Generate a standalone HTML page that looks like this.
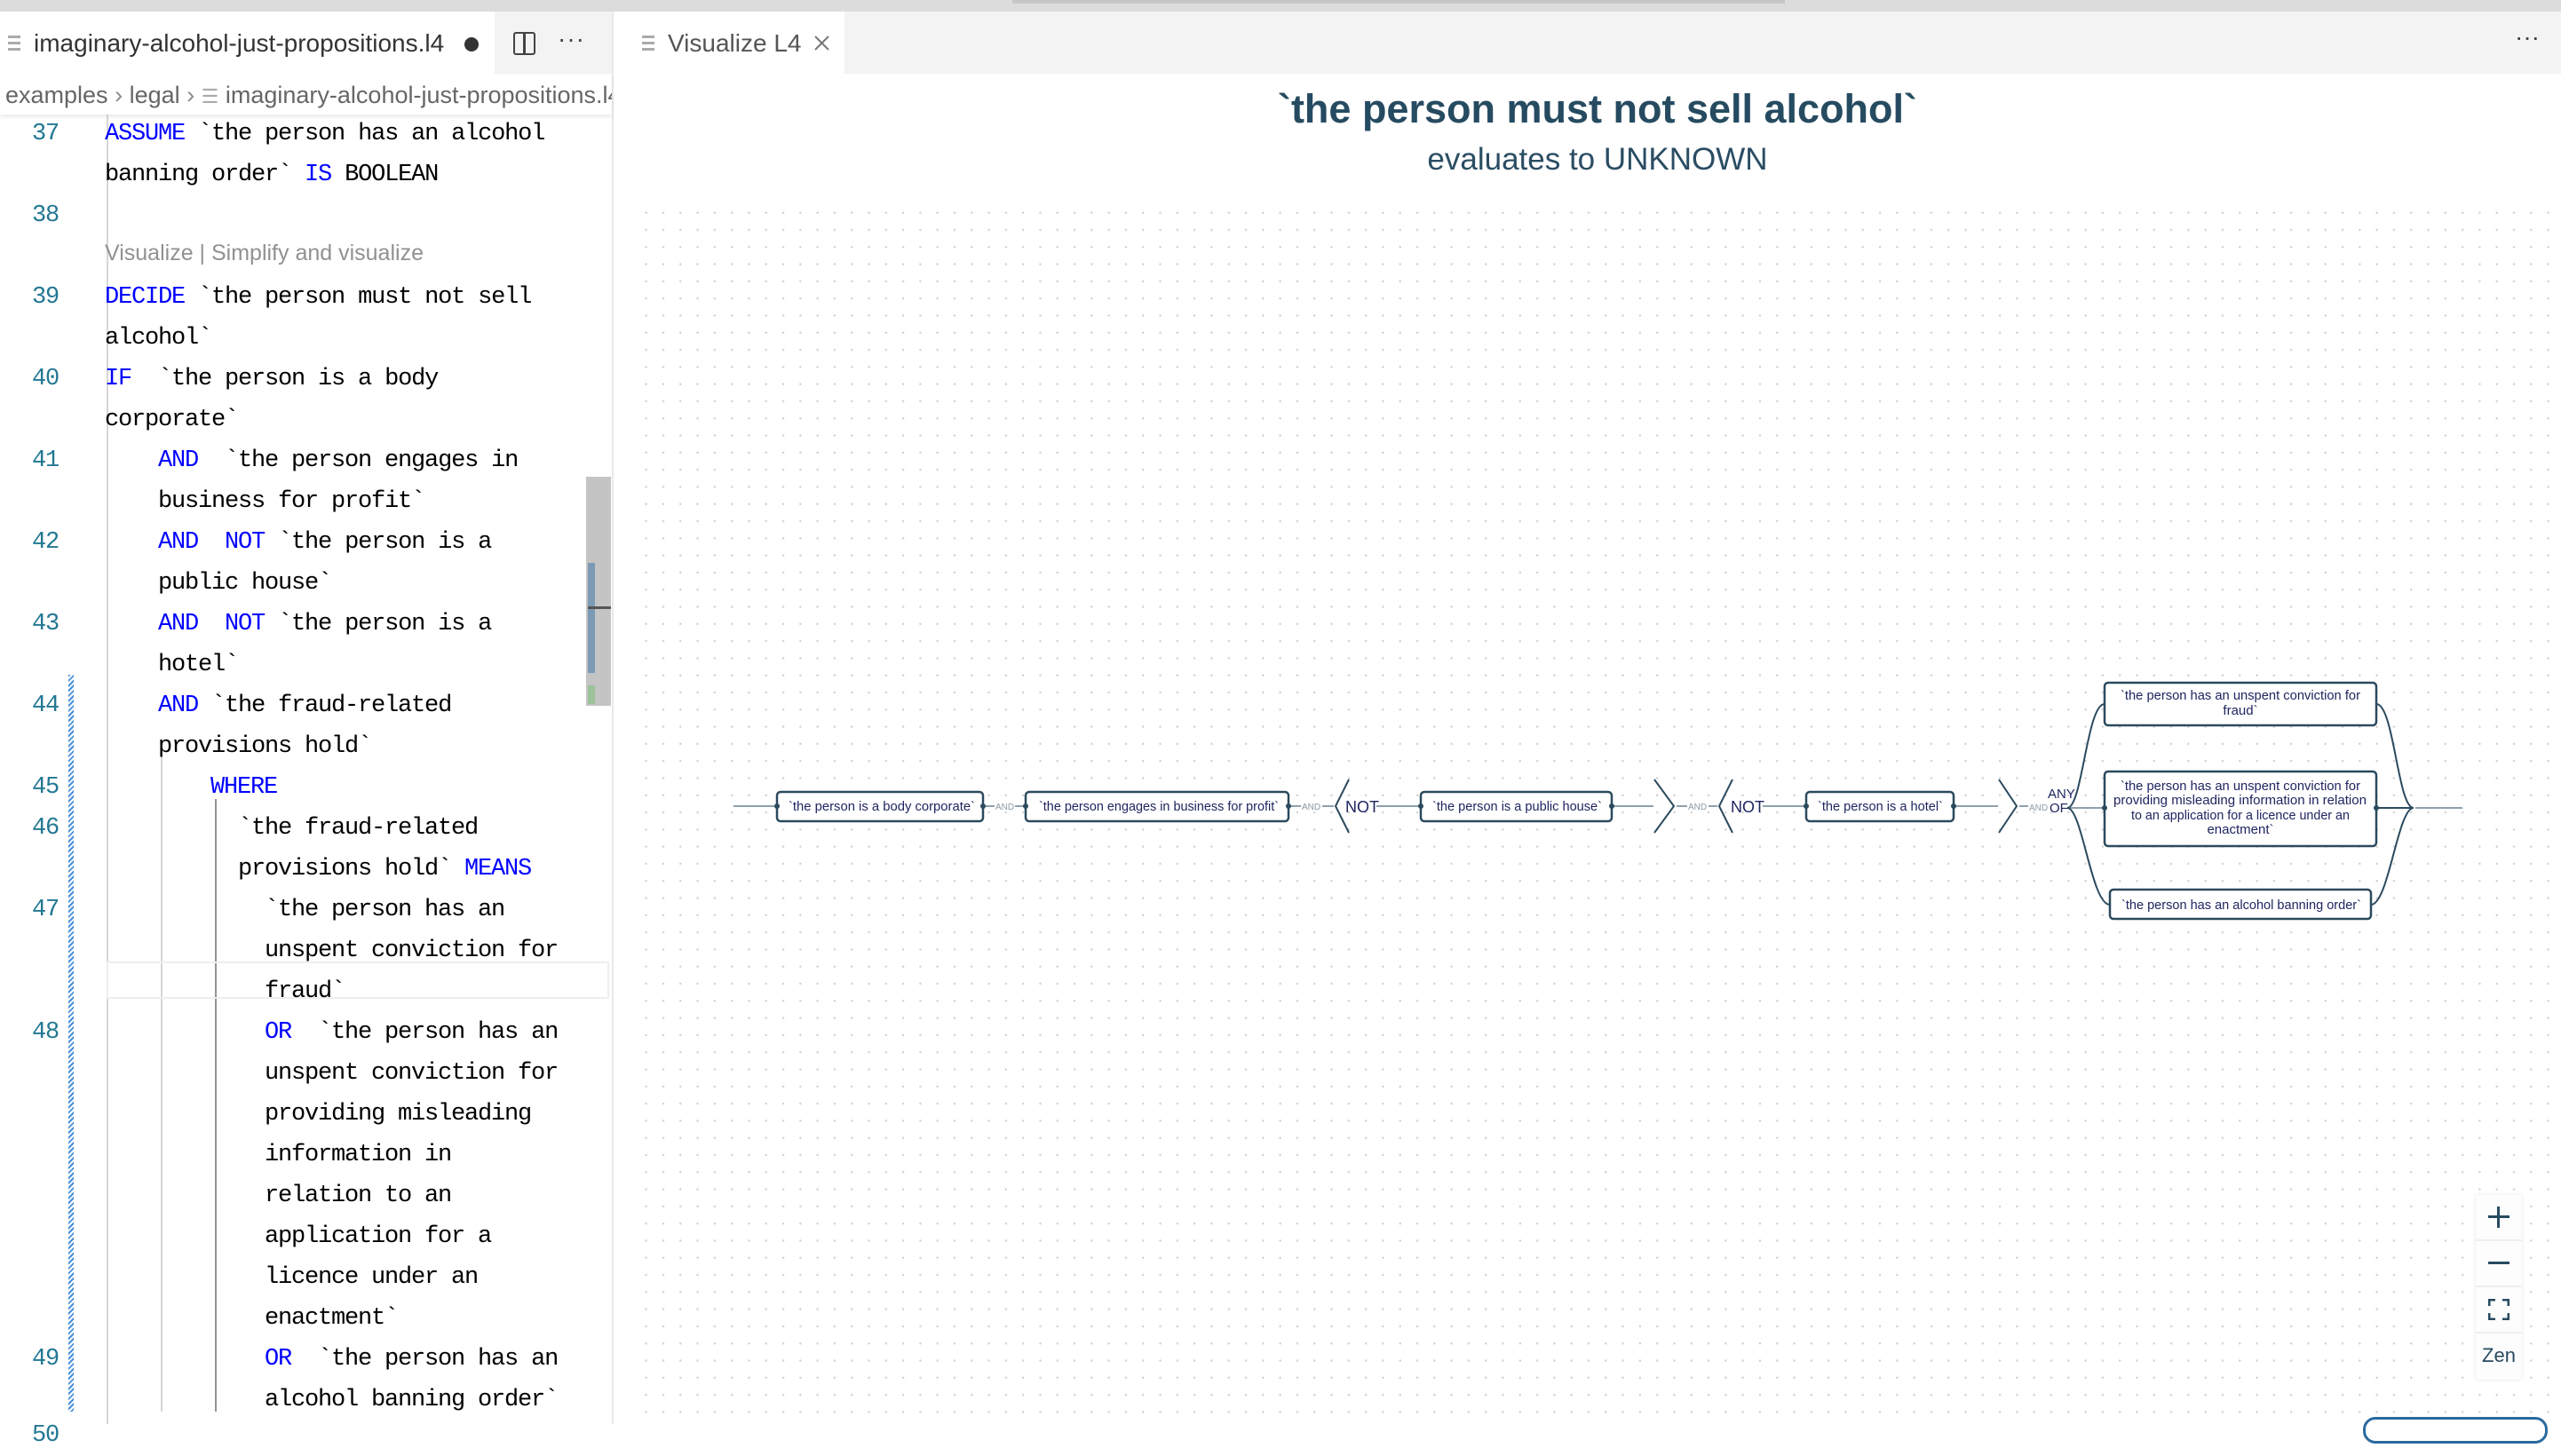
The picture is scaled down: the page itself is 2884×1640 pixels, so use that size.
<!DOCTYPE html>
<html><head><meta charset="utf-8"><style>
*{margin:0;padding:0;box-sizing:border-box}
body{width:2884px;height:1604px;overflow:hidden;background:#fff;position:relative;font-family:"Liberation Sans",sans-serif}
.abs{position:absolute}
.code{font-family:"Liberation Mono",monospace;font-size:27px;letter-spacing:-1.2px;white-space:pre;color:#000;line-height:46px;height:46px}
.ln{font-family:"Liberation Mono",monospace;font-size:27px;letter-spacing:-1.2px;color:#237893;line-height:46px;position:absolute;left:36px}
.k{color:#0000ff}
.ig{position:absolute;width:2px;background:#d6d6d6}
</style></head><body>
<div class="abs" style="left:0;top:0;width:2884px;height:13px;background:#dcdcdc"></div>
<div class="abs" style="left:1140px;top:0;width:870px;height:4px;background:#c6c6c6"></div>
<div class="abs" style="left:0;top:13px;width:2884px;height:70px;background:#f3f3f3"></div>
<div class="abs" style="left:0;top:13px;width:557px;height:70px;background:#fff"></div>
<div class="abs" style="left:9px;top:40px;width:14px;height:3px;background:#aaa;box-shadow:0 7px 0 #aaa,0 14px 0 #aaa"></div>
<div class="abs" style="left:38px;top:33px;font-size:28px;color:#333">imaginary-alcohol-just-propositions.l4</div>
<div class="abs" style="left:523px;top:42px;width:16px;height:16px;border-radius:50%;background:#333"></div>
<div class="abs" style="left:578px;top:36px;width:25px;height:26px;border:2.5px solid #444;border-radius:3px"></div>
<div class="abs" style="left:589px;top:36px;width:2.5px;height:26px;background:#444"></div>
<div class="abs" style="left:628px;top:28px;font-size:28px;color:#444;letter-spacing:1px">···</div>
<div class="abs" style="left:689px;top:13px;width:2px;height:1591px;background:#e8e8e8"></div>
<div class="abs" style="left:691px;top:13px;width:260px;height:70px;background:#fff"></div>
<div class="abs" style="left:723px;top:40px;width:14px;height:3px;background:#aaa;box-shadow:0 7px 0 #aaa,0 14px 0 #aaa"></div>
<div class="abs" style="left:752px;top:33px;font-size:28px;color:#555">Visualize L4</div>
<svg class="abs" style="left:917px;top:40px" width="17" height="17"><path d="M1 1L16 16M16 1L1 16" stroke="#777" stroke-width="2"/></svg>
<div class="abs" style="left:2832px;top:26px;font-size:28px;color:#444">···</div>
<div class="abs" style="left:0;top:83px;width:689px;height:46px;background:#fff;box-shadow:0 3px 4px rgba(0,0,0,.08);z-index:2"></div>
<div class="abs" style="left:6px;top:92px;font-size:27px;color:#666;white-space:nowrap;width:683px;overflow:hidden;z-index:3">examples <span style="color:#888">›</span> legal <span style="color:#888">›</span> <span style="color:#aaa;font-size:22px">☰</span> imaginary-alcohol-just-propositions.l4</div>

<div class="abs" style="left:0;top:4px;width:689px;height:1600px">
<div class="ig" style="left:120px;top:125px;height:1475px"></div>
<div class="ig" style="left:181px;top:846px;height:740px"></div>
<div class="ig" style="left:242px;top:896px;height:690px;background:#949494"></div>
<div class="abs" style="left:77px;top:756px;width:6px;height:830px;background:repeating-linear-gradient(135deg,#4a90d9 0 2px,#fff 2px 4px)"></div>
<div class="abs" style="left:120px;top:1079px;width:566px;height:42px;border:2px solid #eee"></div>
<div class="abs" style="left:660px;top:533px;width:28px;height:258px;background:#c4c4c4"></div>
<div class="abs" style="left:662px;top:630px;width:8px;height:124px;background:#7d9ab5"></div>
<div class="abs" style="left:662px;top:679px;width:26px;height:3px;background:#555"></div>
<div class="abs" style="left:662px;top:768px;width:8px;height:21px;background:#9cc29a"></div>

<div class="ln" style="top:124px">37</div>
<div class="ln" style="top:216px">38</div>
<div class="ln" style="top:308px">39</div>
<div class="ln" style="top:400px">40</div>
<div class="ln" style="top:492px">41</div>
<div class="ln" style="top:584px">42</div>
<div class="ln" style="top:676px">43</div>
<div class="ln" style="top:768px">44</div>
<div class="ln" style="top:860px">45</div>
<div class="ln" style="top:906px">46</div>
<div class="ln" style="top:998px">47</div>
<div class="ln" style="top:1136px">48</div>
<div class="ln" style="top:1504px">49</div>
<div class="ln" style="top:1590px">50</div>

<div class="abs code" style="left:118px;top:124px"><span class="k">ASSUME</span> `the person has an alcohol</div>
<div class="abs code" style="left:118px;top:170px">banning order` <span class="k">IS</span> BOOLEAN</div>
<div class="abs" style="left:118px;top:258px;font-size:25px;line-height:46px;color:#919191">Visualize | Simplify and visualize</div>
<div class="abs code" style="left:118px;top:308px"><span class="k">DECIDE</span> `the person must not sell</div>
<div class="abs code" style="left:118px;top:354px">alcohol`</div>
<div class="abs code" style="left:118px;top:400px"><span class="k">IF</span>  `the person is a body</div>
<div class="abs code" style="left:118px;top:446px">corporate`</div>
<div class="abs code" style="left:178px;top:492px"><span class="k">AND</span>  `the person engages in</div>
<div class="abs code" style="left:178px;top:538px">business for profit`</div>
<div class="abs code" style="left:178px;top:584px"><span class="k">AND</span>  <span class="k">NOT</span> `the person is a</div>
<div class="abs code" style="left:178px;top:630px">public house`</div>
<div class="abs code" style="left:178px;top:676px"><span class="k">AND</span>  <span class="k">NOT</span> `the person is a</div>
<div class="abs code" style="left:178px;top:722px">hotel`</div>
<div class="abs code" style="left:178px;top:768px"><span class="k">AND</span> `the fraud-related</div>
<div class="abs code" style="left:178px;top:814px">provisions hold`</div>
<div class="abs code" style="left:237px;top:860px"><span class="k">WHERE</span></div>
<div class="abs code" style="left:268px;top:906px">`the fraud-related</div>
<div class="abs code" style="left:268px;top:952px">provisions hold` <span class="k">MEANS</span></div>
<div class="abs code" style="left:298px;top:998px">`the person has an</div>
<div class="abs code" style="left:298px;top:1044px">unspent conviction for</div>
<div class="abs code" style="left:298px;top:1090px">fraud`</div>
<div class="abs code" style="left:298px;top:1136px"><span class="k">OR</span>  `the person has an</div>
<div class="abs code" style="left:298px;top:1182px">unspent conviction for</div>
<div class="abs code" style="left:298px;top:1228px">providing misleading</div>
<div class="abs code" style="left:298px;top:1274px">information in</div>
<div class="abs code" style="left:298px;top:1320px">relation to an</div>
<div class="abs code" style="left:298px;top:1366px">application for a</div>
<div class="abs code" style="left:298px;top:1412px">licence under an</div>
<div class="abs code" style="left:298px;top:1458px">enactment`</div>
<div class="abs code" style="left:298px;top:1504px"><span class="k">OR</span>  `the person has an</div>
<div class="abs code" style="left:298px;top:1550px">alcohol banning order`</div>
</div>

<div class="abs" style="left:710px;top:222px;width:2174px;height:1382px;background-image:radial-gradient(circle,#d2d2d2 1px,transparent 1.5px);background-size:19.3px 19.3px;background-position:8px 8px"></div>
<div class="abs" style="left:691px;top:97px;width:2216px;text-align:center;font-size:45px;font-weight:bold;color:#264b61">`the person must not sell alcohol`</div>
<div class="abs" style="left:691px;top:160px;width:2216px;text-align:center;font-size:35px;color:#2a4d63">evaluates to UNKNOWN</div>

<svg class="abs" style="left:0;top:0" width="2884" height="1604" font-family="Liberation Sans, sans-serif">
<g stroke="#8fa0ad" stroke-width="2" fill="none">
<line x1="826" y1="908" x2="875" y2="908"/>
<line x1="1107" y1="908" x2="1120" y2="908"/><line x1="1143" y1="908" x2="1155" y2="908"/>
<line x1="1451" y1="908" x2="1465" y2="908"/><line x1="1489" y1="908" x2="1502" y2="908"/>
<line x1="1550" y1="908" x2="1600" y2="908"/>
<line x1="1815" y1="908" x2="1862" y2="908"/>
<line x1="1888" y1="908" x2="1900" y2="908"/><line x1="1924" y1="908" x2="1934" y2="908"/>
<line x1="1985" y1="908" x2="2034" y2="908"/>
<line x1="2200" y1="908" x2="2250" y2="908"/>
<line x1="2274" y1="908" x2="2284" y2="908"/>
<line x1="2328" y1="910" x2="2370" y2="910"/>
<line x1="2720" y1="910" x2="2773" y2="910"/>
</g>
<g stroke="#2b4a5e" stroke-width="2" fill="none">
<path d="M1519 878 L1504 908 L1519 938"/>
<path d="M1863 878 L1885 908 L1863 938"/>
<path d="M1951 878 L1936 908 L1951 938"/>
<path d="M2251 878 L2271 908 L2251 938"/>
<path d="M2328 910 C2345 910 2350 793 2370 793"/>
<path d="M2328 910 C2345 910 2355 1019 2376 1019"/>
<path d="M2676 793 C2696 793 2700 910 2718 910"/>
<path d="M2670 1019 C2690 1019 2700 910 2718 910"/>
<path d="M2665 910 L2718 910"/>
</g>
<g stroke="#2b4a5e" stroke-width="2.5" fill="#fff">
<rect x="875" y="892" width="232" height="33" rx="4"/>
<rect x="1155" y="892" width="296" height="33" rx="4"/>
<rect x="1600" y="892" width="215" height="33" rx="4"/>
<rect x="2034" y="892" width="166" height="33" rx="4"/>
<rect x="2370" y="769" width="306" height="48" rx="4"/>
<rect x="2370" y="869" width="306" height="84" rx="4"/>
<rect x="2376" y="1002" width="294" height="33" rx="4"/>
</g>
<g fill="#2b4a5e">
<circle cx="875" cy="908" r="3"/><circle cx="1107" cy="908" r="3"/><circle cx="1155" cy="908" r="3"/><circle cx="1451" cy="908" r="3"/>
<circle cx="1600" cy="908" r="3"/><circle cx="1815" cy="908" r="3"/><circle cx="2034" cy="908" r="3"/><circle cx="2200" cy="908" r="3"/>
<circle cx="2370" cy="910" r="3"/><circle cx="2676" cy="910" r="3"/>
</g>
<g fill="#1f2560" font-size="15">
<text x="888" y="913" textLength="210" lengthAdjust="spacingAndGlyphs">`the person is a body corporate`</text>
<text x="1170" y="913" textLength="270" lengthAdjust="spacingAndGlyphs">`the person engages in business for profit`</text>
<text x="1613" y="913" textLength="191" lengthAdjust="spacingAndGlyphs">`the person is a public house`</text>
<text x="2047" y="913" textLength="141" lengthAdjust="spacingAndGlyphs">`the person is a hotel`</text>
<text x="2388" y="788" textLength="270" lengthAdjust="spacingAndGlyphs">`the person has an unspent conviction for</text>
<text x="2523" y="805" text-anchor="middle">fraud`</text>
<text x="2388" y="890" textLength="270" lengthAdjust="spacingAndGlyphs">`the person has an unspent conviction for</text>
<text x="2380" y="906" textLength="285" lengthAdjust="spacingAndGlyphs">providing misleading information in relation</text>
<text x="2400" y="923" textLength="246" lengthAdjust="spacingAndGlyphs">to an application for a licence under an</text>
<text x="2523" y="939" text-anchor="middle">enactment`</text>
<text x="2389" y="1024" textLength="270" lengthAdjust="spacingAndGlyphs">`the person has an alcohol banning order`</text>
</g>
<g fill="#8a9aa6" font-size="10">
<text x="1121" y="912">AND</text><text x="1466" y="912">AND</text><text x="1901" y="912">AND</text><text x="2285" y="913">AND</text>
</g>
<g fill="#1f2560" font-size="18">
<text x="1515" y="915">NOT</text><text x="1949" y="915">NOT</text>
<text x="2306" y="899" font-size="15">ANY</text><text x="2308" y="915" font-size="15">OF</text>
</g>
</svg>

<div class="abs" style="left:2788px;top:1346px;width:52px;height:208px;background:#eee;box-shadow:0 0 4px rgba(0,0,0,.1)"></div>
<div class="abs" style="left:2788px;top:1346px;width:52px;height:50px;background:#fdfdfd"></div>
<div class="abs" style="left:2788px;top:1398px;width:52px;height:50px;background:#fdfdfd"></div>
<div class="abs" style="left:2788px;top:1450px;width:52px;height:50px;background:#fdfdfd"></div>
<div class="abs" style="left:2788px;top:1502px;width:52px;height:52px;background:#fdfdfd"></div>
<div class="abs" style="left:2802px;top:1369px;width:24px;height:3px;background:#274b60"></div>
<div class="abs" style="left:2812px;top:1359px;width:3px;height:24px;background:#274b60"></div>
<div class="abs" style="left:2802px;top:1421px;width:24px;height:3px;background:#274b60"></div>
<svg class="abs" style="left:2802px;top:1463px" width="24" height="24"><path d="M1 8V1H8 M16 1H23V8 M23 16V23H16 M8 23H1V16" stroke="#274b60" stroke-width="3" fill="none"/></svg>
<div class="abs" style="left:2788px;top:1514px;width:52px;text-align:center;font-size:22px;color:#274b60">Zen</div>
<div class="abs" style="left:2661px;top:1596px;width:208px;height:30px;border:3px solid #2a6aa0;border-radius:14px"></div>
</body></html>
